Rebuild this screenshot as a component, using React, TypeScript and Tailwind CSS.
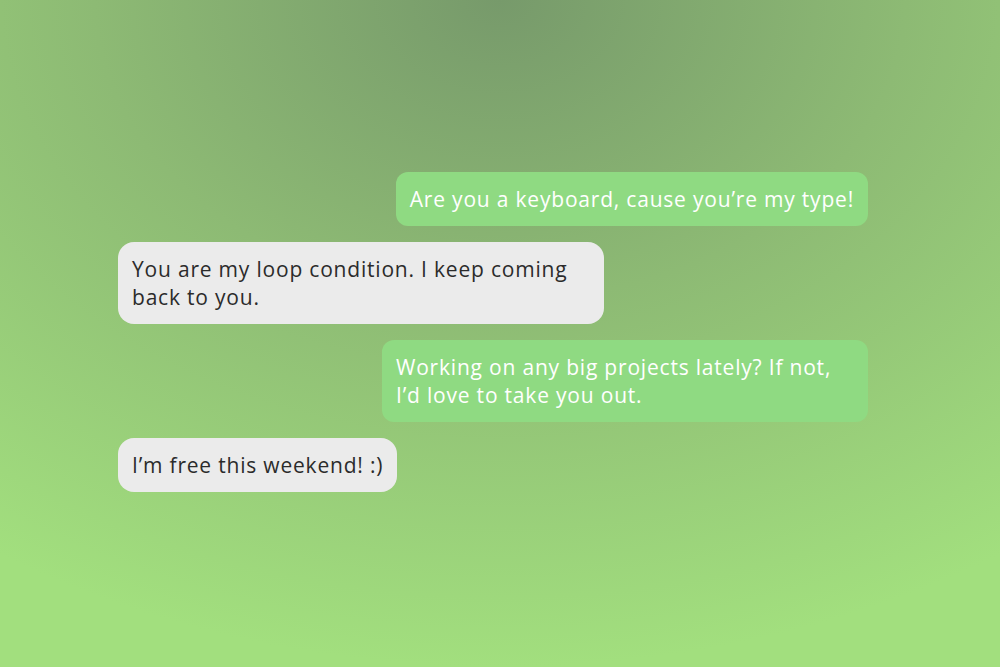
const messages = [
  { mine: true, text: "Are you a keyboard, cause you’re my type!" },
  { mine: false, text: "You are my loop condition. I keep coming back to you." },
  { mine: true, text: "Working on any big projects lately? If not, I’d love to take you out." },
  { mine: false, text: "I’m free this weekend! :)" },
];

function Bubble({ mine, text }: { mine: boolean; text: string }) {
  return (
    <div className={`flex ${mine ? "justify-end" : "justify-start"}`}>
      <p
        className={`max-w-[486px] px-[14px] py-[13px] text-[21px] leading-[28px] tracking-[0.8px] ${
          mine
            ? "bg-[#8fda82] text-white rounded-[12px]"
            : "bg-[#ebebeb] text-[#2b2b2b] rounded-[16px]"
        }`}
      >
        {text}
      </p>
    </div>
  );
}

export default function App() {
  return (
    <div
      className="w-full h-[667px] overflow-hidden bg-[radial-gradient(ellipse_90%_100%_at_50%_0%,#779a6b_0%,#8dba74_45%,#a2df7e_100%)] pt-[172px]"
      style={{ fontFamily: '"Open Sans", "Liberation Sans", sans-serif' }}
    >
      <div className="w-[750px] ml-[118px] flex flex-col gap-4">
        {messages.map((m, i) => (
          <Bubble key={i} {...m} />
        ))}
      </div>
    </div>
  );
}
